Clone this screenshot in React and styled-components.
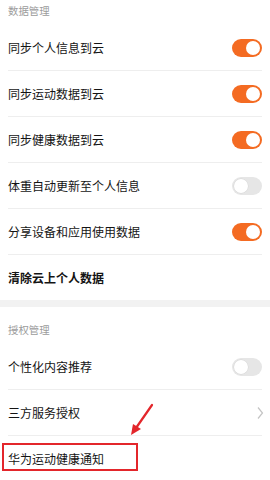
import React from "react";
import styled, { createGlobalStyle } from "styled-components";

const GlobalStyle = createGlobalStyle`
  body {
    margin: 0;
    background: #ffffff;
    font-family: "Noto Sans CJK SC", "Noto Sans", sans-serif;
  }
`;

const Page = styled.div`
  position: relative;
  width: 270px;
  height: 480px;
  overflow: hidden;
  background: #ffffff;
`;
const SectionTitle = styled.div`
  padding: ${(p) => (p.first ? "6px 8px 9px" : "18px 8px 9px")};
  font-size: 10.4px;
  line-height: 10px;
  color: #9c9c9c;
`;
const Band = styled.div`
  height: 7px;
  background: #f2f2f2;
`;
const Row = styled.div`
  padding: 0 8px;
`;
const RowInner = styled.div`
  display: flex;
  align-items: center;
  justify-content: space-between;
  height: ${(p) => p.h || 46}px;
  box-sizing: border-box;
  border-bottom: ${(p) => (p.last ? "none" : "1px solid #eeeeee")};
`;
const Label = styled.span`
  position: relative;
  font-size: 12px;
  line-height: 16px;
  color: #141414;
  font-weight: ${(p) => (p.bold ? 700 : 400)};

  ${(p) =>
    p.marked &&
    `
    &::after {
      content: "";
      position: absolute;
      left: -6px;
      width: 136px;
      top: -8px;
      bottom: -4px;
      box-sizing: border-box;
      border: 2px solid #e3262b;
    }
  `}
`;
const Toggle = styled.div`
  position: relative;
  width: 30px;
  height: 18px;
  border-radius: 9px;
  background: ${(p) => (p.on ? "#f46b22" : "#e6e6e6")};

  &::after {
    content: "";
    position: absolute;
    top: 2px;
    left: ${(p) => (p.on ? "14px" : "2px")};
    width: 14px;
    height: 14px;
    border-radius: 50%;
    background: #ffffff;
    box-shadow: ${(p) => (p.on ? "none" : "0 0 0 0.5px #d6d6d6")};
  }
`;
const Arrow = styled.svg`
  position: absolute;
  left: 126px;
  top: 400px;
`;

function Chevron() {
  return (
    <svg width="8" height="14" viewBox="0 0 8 14" style={{ marginRight: -2 }}>
      <path d="M2 1.5 L6.5 7 L2 12.5" fill="none" stroke="#c4c4c4" strokeWidth="1.2" />
    </svg>
  );
}

const dataRows = [
  { label: "同步个人信息到云", on: true },
  { label: "同步运动数据到云", on: true },
  { label: "同步健康数据到云", on: true },
  { label: "体重自动更新至个人信息", on: false },
  { label: "分享设备和应用使用数据", on: true },
];

function App() {
  return (
    <>
      <GlobalStyle />
      <Page>
        <SectionTitle first>数据管理</SectionTitle>
        {dataRows.map((r) => (
          <Row key={r.label}>
            <RowInner>
              <Label>{r.label}</Label>
              <Toggle on={r.on} />
            </RowInner>
          </Row>
        ))}
        <Row>
          <RowInner h={45} last>
            <Label bold>清除云上个人数据</Label>
          </RowInner>
        </Row>
        <Band />
        <SectionTitle>授权管理</SectionTitle>
        <Row>
          <RowInner>
            <Label>个性化内容推荐</Label>
            <Toggle on={false} />
          </RowInner>
        </Row>
        <Row>
          <RowInner>
            <Label>三方服务授权</Label>
            <Chevron />
          </RowInner>
        </Row>
        <Row>
          <RowInner last>
            <Label marked>华为运动健康通知</Label>
          </RowInner>
        </Row>
        <Arrow width="30" height="38" viewBox="0 0 30 38">
          <line x1="26" y1="5" x2="10" y2="28" stroke="#e3262b" strokeWidth="2.2" strokeLinecap="round" />
          <polygon points="5,35 7,24 15,29" fill="#e3262b" />
        </Arrow>
      </Page>
    </>
  );
}

export default App;
